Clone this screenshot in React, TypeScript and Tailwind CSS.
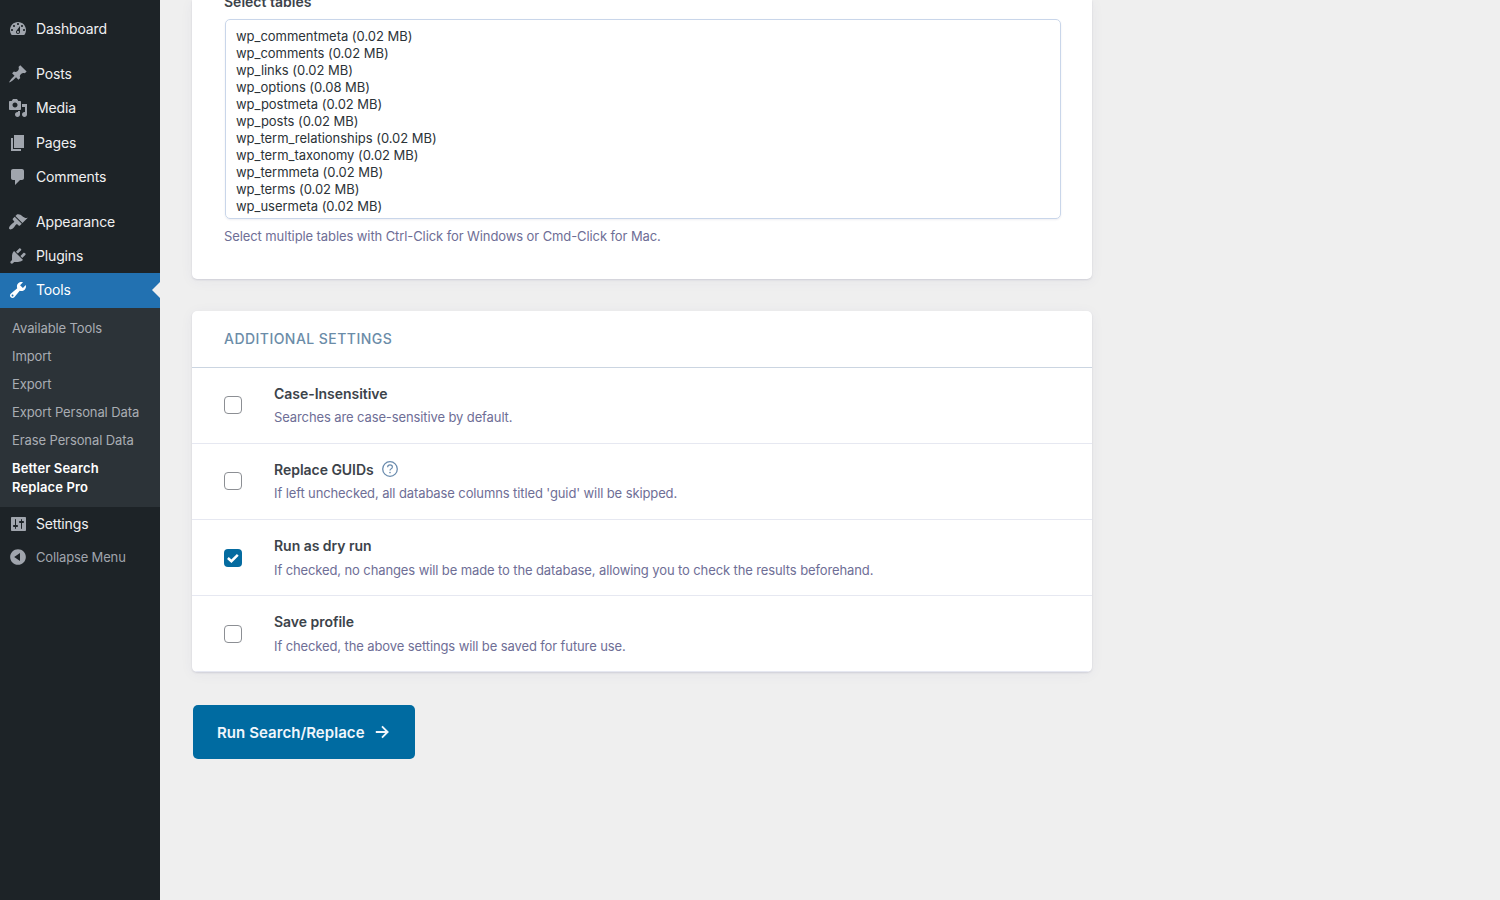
import React, { useState } from 'react';

interface MenuEntry {
  label: string;
  icon: string;
  gap?: boolean;
}

interface Setting {
  id: string;
  title: string;
  text: string;
  help?: boolean;
}

const ICONS = {
  dashboard:
    'M3.76 16h12.48c1.1-1.37 1.76-3.11 1.76-5 0-4.42-3.58-8-8-8s-8 3.58-8 8c0 1.89.66 3.63 1.76 5zM10 4c.55 0 1 .45 1 1s-.45 1-1 1-1-.45-1-1 .45-1 1-1zM6 6c.55 0 1 .45 1 1s-.45 1-1 1-1-.45-1-1 .45-1 1-1zm8 0c.55 0 1 .45 1 1s-.45 1-1 1-1-.45-1-1 .45-1 1-1zm-5.37 5.55L12 7v6c0 1.1-.9 2-2 2s-2-.9-2-2c0-.57.24-1.08.63-1.45zM4 10c.55 0 1 .45 1 1s-.45 1-1 1-1-.45-1-1 .45-1 1-1zm12 0c.55 0 1 .45 1 1s-.45 1-1 1-1-.45-1-1 .45-1 1-1zm-5 3c0-.55-.45-1-1-1s-1 .45-1 1 .45 1 1 1 1-.45 1-1z',
  post: 'M10.44 3.02l1.82-1.82 6.36 6.35-1.83 1.82c-1.05-.68-2.48-.57-3.41.36l-.75.75c-.92.93-1.04 2.35-.35 3.41l-1.83 1.82-2.41-2.41-2.8 2.79c-.42.42-3.38 2.71-3.8 2.29s1.86-3.39 2.28-3.81l2.79-2.79L4.1 9.36l1.83-1.82c1.05.69 2.48.57 3.4-.36l.75-.75c.93-.92 1.05-2.35.36-3.41z',
  media:
    'M13 11V4c0-.55-.45-1-1-1h-1.67L9 1H5L3.67 3H2c-.55 0-1 .45-1 1v7c0 .55.45 1 1 1h10c.55 0 1-.45 1-1zM7 4.5c1.38 0 2.5 1.12 2.5 2.5S8.38 9.5 7 9.5 4.5 8.38 4.5 7 5.62 4.5 7 4.5zM14 6h5v10.5c0 1.38-1.12 2.5-2.5 2.5S14 17.88 14 16.5s1.12-2.5 2.5-2.5c.17 0 .34.02.5.05V9h-3V6zm-4 8.05V13h2v3.5c0 1.38-1.12 2.5-2.5 2.5S7 17.88 7 16.5 8.12 14 9.5 14c.17 0 .34.02.5.05z',
  page: 'M6 15V2h10v13H6zm-1 1h8v2H3V5h2v11z',
  comments: 'M5 2h9c1.1 0 2 .9 2 2v7c0 1.1-.9 2-2 2h-2l-5 5v-5H5c-1.1 0-2-.9-2-2V4c0-1.1.9-2 2-2z',
  appearance:
    'M14.48 11.06L7.41 3.99l1.5-1.5c.5-.56 2.3-.47 3.51.32 1.21.8 1.43 1.28 2.91 2.1 1.18.64 2.45 1.26 4.45.85zm-.71.71L6.7 4.7 4.93 6.47c-.39.39-.39 1.02 0 1.41l1.06 1.06c.39.39.39 1.03 0 1.42-.6.6-1.43 1.11-2.21 1.69-.35.26-.7.53-1.01.84C1.43 14.23.4 16.08 1.4 17.07c.99 1 2.84-.03 4.18-1.36.31-.31.58-.66.85-1.02.57-.78 1.08-1.61 1.69-2.21.39-.39 1.02-.39 1.41 0l1.06 1.06c.39.39 1.02.39 1.41 0z',
  plugins:
    'M13.11 4.36L9.87 7.6 8 5.73l3.24-3.24c.35-.34 1.05-.2 1.56.32.52.51.66 1.21.31 1.55zm-8 1.77l.91-1.12 9.01 9.01-1.19.84c-.71.71-2.63 1.16-3.82 1.16H6.14L4.9 17.26c-.59.59-1.54.59-2.12 0-.59-.58-.59-1.53 0-2.12l1.24-1.24v-3.88c0-1.13.4-3.19 1.09-3.89zm7.26 3.97l3.24-3.24c.34-.35 1.04-.21 1.55.31.52.51.66 1.21.31 1.55l-3.24 3.25z',
  tools:
    'M16.68 9.77c-1.34 1.34-3.3 1.67-4.95.99l-5.41 6.52c-.99.99-2.59.99-3.58 0s-.99-2.59 0-3.57l6.52-5.42c-.68-1.65-.35-3.61.99-4.95 1.28-1.28 3.12-1.62 4.72-1.06l-2.89 2.89 2.82 2.82 2.86-2.87c.53 1.58.18 3.39-1.08 4.65zM3.81 16.21c.4.39 1.04.39 1.43 0 .4-.4.4-1.04 0-1.43-.39-.4-1.03-.4-1.43 0-.39.39-.39 1.03 0 1.43z',
  settings:
    'M18 16V4c0-.55-.45-1-1-1H4c-.55 0-1 .45-1 1v12c0 .55.45 1 1 1h13c.55 0 1-.45 1-1zM8 11h1c.55 0 1 .45 1 1s-.45 1-1 1H8v1.5c0 .28-.22.5-.5.5s-.5-.22-.5-.5V13H6c-.55 0-1-.45-1-1s.45-1 1-1h1V5.5c0-.28.22-.5.5-.5s.5.22.5.5V11zm5-2h-1c-.55 0-1-.45-1-1s.45-1 1-1h1V5.5c0-.28.22-.5.5-.5s.5.22.5.5V7h1c.55 0 1 .45 1 1s-.45 1-1 1h-1v5.5c0 .28-.22.5-.5.5s-.5-.22-.5-.5V9z',
  collapse: 'M10 2.16c4.33 0 7.84 3.51 7.84 7.84s-3.51 7.84-7.84 7.84S2.16 14.33 2.16 10 5.71 2.16 10 2.16zm2 11.72V6.12L6.18 9.97z',
};

const MENU: MenuEntry[] = [
  { label: 'Dashboard', icon: ICONS.dashboard },
  { label: 'Posts', icon: ICONS.post, gap: true },
  { label: 'Media', icon: ICONS.media },
  { label: 'Pages', icon: ICONS.page },
  { label: 'Comments', icon: ICONS.comments },
  { label: 'Appearance', icon: ICONS.appearance, gap: true },
  { label: 'Plugins', icon: ICONS.plugins },
];

const SUBMENU = ['Available Tools', 'Import', 'Export', 'Export Personal Data', 'Erase Personal Data'];

const TABLES = [
  'wp_commentmeta (0.02 MB)',
  'wp_comments (0.02 MB)',
  'wp_links (0.02 MB)',
  'wp_options (0.08 MB)',
  'wp_postmeta (0.02 MB)',
  'wp_posts (0.02 MB)',
  'wp_term_relationships (0.02 MB)',
  'wp_term_taxonomy (0.02 MB)',
  'wp_termmeta (0.02 MB)',
  'wp_terms (0.02 MB)',
  'wp_usermeta (0.02 MB)',
];

const SETTINGS: Setting[] = [
  { id: 'case', title: 'Case-Insensitive', text: 'Searches are case-sensitive by default.' },
  { id: 'guids', title: 'Replace GUIDs', text: "If left unchecked, all database columns titled 'guid' will be skipped.", help: true },
  { id: 'dry', title: 'Run as dry run', text: 'If checked, no changes will be made to the database, allowing you to check the results beforehand.' },
  { id: 'save', title: 'Save profile', text: 'If checked, the above settings will be saved for future use.' },
];

const DashIcon: React.FC<{ path: string; className?: string }> = ({ path, className = 'text-[#a0a5ad]' }) => (
  <svg viewBox="0 0 20 20" width={20} height={20} fill="currentColor" className={className}>
    <path d={path} />
  </svg>
);

const MenuRow: React.FC<MenuEntry> = ({ label, icon, gap }) => (
  <a className={`flex h-[34.3px] items-center gap-2 pl-2 text-[#f0f0f1] ${gap ? 'mt-[10.7px]' : ''}`}>
    <DashIcon path={icon} />
    {label}
  </a>
);

const Sidebar: React.FC = () => (
  <nav className="w-40 shrink-0 bg-[#1d2327] pt-[11.8px] text-sm tracking-[-0.15px]">
    {MENU.map((item) => (
      <MenuRow key={item.label} {...item} />
    ))}
    <a className="relative flex h-[34.3px] items-center gap-2 bg-[#2271b1] pl-2 text-white">
      <DashIcon path={ICONS.tools} className="text-white" />
      Tools
      <span className="absolute right-0 top-[9px] border-y-8 border-r-8 border-y-transparent border-r-[#efefef]" />
    </a>
    <div className="flex h-[199px] flex-col bg-[#2c3338] px-3 pt-1.5 text-[13px] tracking-[-0.1px] text-[#a9adb3]">
      {SUBMENU.map((item) => (
        <a key={item} className="py-[5px] leading-[18px]">
          {item}
        </a>
      ))}
      <a className="pt-[5px] font-semibold leading-[19px] tracking-[0.12px] text-white">
        Better Search
        <br />
        Replace Pro
      </a>
    </div>
    <MenuRow label="Settings" icon={ICONS.settings} />
    <a className="flex h-[33px] items-center gap-2 pl-2 text-[13px] text-[#a0a5ad]">
      <DashIcon path={ICONS.collapse} />
      Collapse Menu
    </a>
  </nav>
);

const HelpIcon: React.FC = () => (
  <svg viewBox="0 0 16 16" width={16} height={16} fill="none" stroke="#6b8cae" className="ml-2 -mt-0.5">
    <circle cx="8" cy="8" r="7.3" strokeWidth="1.3" />
    <path d="M5.6 6.2C5.7 4.7 6.7 3.9 8 3.9s2.4.8 2.4 2.1c0 1-.6 1.4-1.2 1.8-.7.4-1.2.9-1.2 1.7" strokeWidth="1.2" />
    <circle cx="8" cy="11.6" r=".8" fill="#6b8cae" stroke="none" />
  </svg>
);

const App: React.FC = () => {
  const [checked, setChecked] = useState<string[]>(['dry']);

  const toggle = (id: string) => {
    setChecked((prev) => (prev.includes(id) ? prev.filter((x) => x !== id) : [...prev, id]));
  };

  return (
    <div className="flex h-[900px] overflow-hidden bg-[#efefef] font-['Inter',sans-serif]">
      <Sidebar />
      <main className="ml-8 w-[900px]">
        <section className="flex h-[279px] flex-col rounded-b-[5px] bg-white px-8 shadow-[0_1px_2px_rgba(40,40,90,0.14),0_2px_14px_rgba(60,60,110,0.05)]">
          <div className="-mt-2 h-7 shrink-0 text-sm font-semibold leading-5 text-[#3c434a]">Select tables</div>
          <div className="ml-px mt-[-1px] h-[200px] w-[836px] shrink-0 rounded-[5px] border border-[#c9d6ea] pl-2.5 pt-2 text-[13px] leading-[17px] tracking-[-0.03px] text-[#2c3338] shadow-[0_1px_2px_rgba(40,40,90,0.08)]">
            {TABLES.map((table) => (
              <div key={table}>{table}</div>
            ))}
          </div>
          <p className="mt-[7px] text-[13px] leading-5 tracking-[-0.095px] text-[#6e6e96]">
            Select multiple tables with Ctrl-Click for Windows or Cmd-Click for Mac.
          </p>
        </section>

        <section className="mt-8 h-[361px] overflow-hidden rounded-[5px] bg-white shadow-[0_1px_2px_rgba(40,40,90,0.14),0_2px_14px_rgba(60,60,110,0.05)]">
          <h2 className="flex h-[56.6px] items-center border-b border-[#cbd5e1] px-8 text-sm font-medium tracking-[0.46px] text-[#6b8ca8]">
            ADDITIONAL SETTINGS
          </h2>
          {SETTINGS.map((s) => (
            <div key={s.id} className="flex h-[76.2px] items-center border-b border-[#e6e8f1] px-8">
              <button
                onClick={() => toggle(s.id)}
                className={`flex h-[18px] w-[18px] items-center justify-center rounded-[4px] ${
                  checked.includes(s.id) ? 'bg-[#046ba0]' : 'border border-[#8c8f94] bg-white'
                }`}
              >
                {checked.includes(s.id) && (
                  <svg viewBox="0 0 18 18" width={18} height={18} fill="none" stroke="#fff" strokeWidth="2.5">
                    <path d="M3.9 9l3.5 3.2 6.4-6.4" />
                  </svg>
                )}
              </button>
              <div className="mb-[-0.56px] ml-8">
                <div className="flex h-5 items-center text-sm font-semibold tracking-[-0.03px] text-[#3c434a]">
                  {s.title}
                  {s.help && <HelpIcon />}
                </div>
                <p className="mt-[3.35px] text-[13px] leading-5 tracking-[-0.11px] text-[#6e6e96]">{s.text}</p>
              </div>
            </div>
          ))}
        </section>

        <button className="ml-px mt-[33px] flex h-[54px] w-[222px] items-center rounded-[5px] bg-[#006ba1] pl-6 pt-0.5 text-[15px] font-semibold tracking-[0.06px] text-[#f0f6fc]">
          Run Search/Replace
          <svg viewBox="0 0 14 14" width={14} height={14} fill="none" stroke="currentColor" strokeWidth="1.9" className="-mt-0.5 ml-2.5">
            <path d="M.8 7h11.6M7 1.4L12.6 7 7 12.6" />
          </svg>
        </button>
      </main>
    </div>
  );
};

export default App;
